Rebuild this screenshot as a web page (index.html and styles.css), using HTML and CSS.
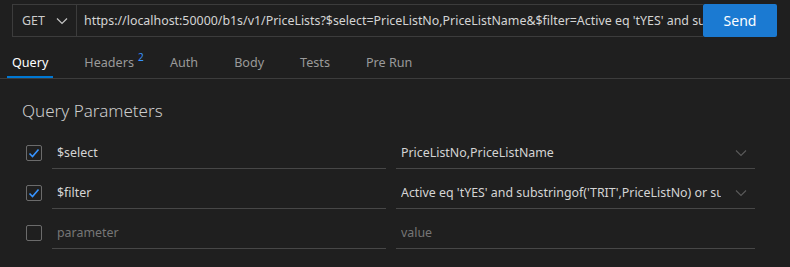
FILE: index.html
```html
<!DOCTYPE html>
<html lang="en">

<head>
    <meta charset="UTF-8">
    <title>Request - Query</title>
    <link rel="stylesheet" href="styles.css">
</head>

<body>
    <div class="request-bar">
        <div class="method">
            <span>GET</span>
            <svg class="caret" width="12" height="8" viewBox="0 0 12 8"><path d="M1 1.5 L6 6.5 L11 1.5" fill="none" stroke="#c5c5c5" stroke-width="1.2"/></svg>
        </div>
        <div class="url">https://localhost:50000/b1s/v1/PriceLists?$select=PriceListNo,PriceListName&amp;$filter=Active eq 'tYES' and substringof('TRIT',PriceListNo) or substringof('TRIT',PriceListName)</div>
        <button class="send">Send</button>
    </div>

    <div class="tabs">
        <div class="tab active">Query</div>
        <div class="tab">Headers<sup class="badge">2</sup></div>
        <div class="tab">Auth</div>
        <div class="tab">Body</div>
        <div class="tab">Tests</div>
        <div class="tab">Pre Run</div>
    </div>

    <div class="params">
        <h3 class="params-title">Query Parameters</h3>

        <div class="param-row">
            <span class="check on"><svg width="14" height="14" viewBox="0 0 14 14"><path d="M2.5 7.5 L5.5 10.5 L11.5 3.5" fill="none" stroke="#3794ff" stroke-width="1.6"/></svg></span>
            <div class="field key">$select</div>
            <div class="field value">
                <span class="field-text">PriceListNo,PriceListName</span>
                <svg class="chev" width="12" height="8" viewBox="0 0 12 8"><path d="M1 1.5 L6 6.5 L11 1.5" fill="none" stroke="#5a5a5a" stroke-width="1.1"/></svg>
            </div>
        </div>

        <div class="param-row">
            <span class="check on"><svg width="14" height="14" viewBox="0 0 14 14"><path d="M2.5 7.5 L5.5 10.5 L11.5 3.5" fill="none" stroke="#3794ff" stroke-width="1.6"/></svg></span>
            <div class="field key">$filter</div>
            <div class="field value">
                <span class="field-text">Active eq 'tYES' and substringof('TRIT',PriceListNo) or substringof('TRIT',PriceListName)</span>
                <svg class="chev" width="12" height="8" viewBox="0 0 12 8"><path d="M1 1.5 L6 6.5 L11 1.5" fill="none" stroke="#5a5a5a" stroke-width="1.1"/></svg>
            </div>
        </div>

        <div class="param-row">
            <span class="check"></span>
            <div class="field key placeholder">parameter</div>
            <div class="field value placeholder"><span class="field-text">value</span></div>
        </div>
    </div>
</body>

</html>
```

FILE: styles.css
```css
* {
    padding: 0;
    margin: 0;
    box-sizing: border-box;
}

body {
    background: #1f1f1f;
    color: #cccccc;
    font-family: "Noto Sans", "Open Sans", sans-serif;
    font-size: 12.4px;
    width: 790px;
    height: 267px;
    overflow: hidden;
}

.request-bar {
    display: flex;
    padding: 4px 13px 0 12px;
    height: 37px;
}

.method {
    width: 65px;
    height: 33px;
    border: 1px solid #3c3c3c;
    display: flex;
    align-items: center;
    justify-content: space-between;
    padding: 0 8px 0 9px;
    color: #cccccc;
}

.url {
    flex: 1;
    height: 33px;
    border-top: 1px solid #3c3c3c;
    border-bottom: 1px solid #3c3c3c;
    line-height: 31px;
    padding-left: 7px;
    white-space: nowrap;
    overflow: hidden;
    color: #d4d4d4;
}

.send {
    width: 74px;
    height: 33px;
    background: #1b7ad2;
    color: #ffffff;
    border: none;
    border-radius: 2px;
    font-family: inherit;
    font-size: 14px;
}

.tabs {
    display: flex;
    height: 42px;
    border-bottom: 1px solid #3c3c3c;
    padding-left: 7px;
    align-items: flex-end;
}

.tab {
    position: relative;
    height: 26px;
    padding: 0 5px;
    margin-right: 26px;
    color: #9a9a9a;
    font-size: 12.6px;
    line-height: 22px;
    border-bottom: 2px solid transparent;
}

.tab.active {
    color: #ffffff;
    border-bottom-color: #0078d4;
}

.badge {
    position: absolute;
    left: 100%;
    top: -2px;
    margin-left: -1px;
    font-size: 10px;
    line-height: 14px;
    color: #3794ff;
}

.params {
    padding: 0 35px 0 22px;
}

.params-title {
    font-weight: 300;
    font-size: 17px;
    color: #cccccc;
    margin-top: 21px;
    margin-bottom: 11px;
    height: 22px;
    line-height: 22px;
}

.param-row {
    display: flex;
    align-items: center;
    height: 40px;
}

.check {
    width: 16px;
    height: 16px;
    border: 1px solid #6b6b6b;
    border-radius: 2px;
    margin: 0 10px 0 4px;
    display: flex;
    align-items: center;
    justify-content: center;
}

.field {
    height: 31px;
    border-bottom: 1px solid #474747;
    line-height: 30px;
    padding-left: 5px;
    color: #d4d4d4;
    white-space: nowrap;
    overflow: hidden;
}

.key {
    width: 334px;
    margin-right: 10px;
}

.value {
    flex: 1;
    display: flex;
    align-items: center;
    padding-right: 8px;
}

.field-text {
    flex: 1;
    overflow: hidden;
    margin-right: 14px;
}

.placeholder {
    color: #767676;
}

.chev {
    flex: none;
}
```
